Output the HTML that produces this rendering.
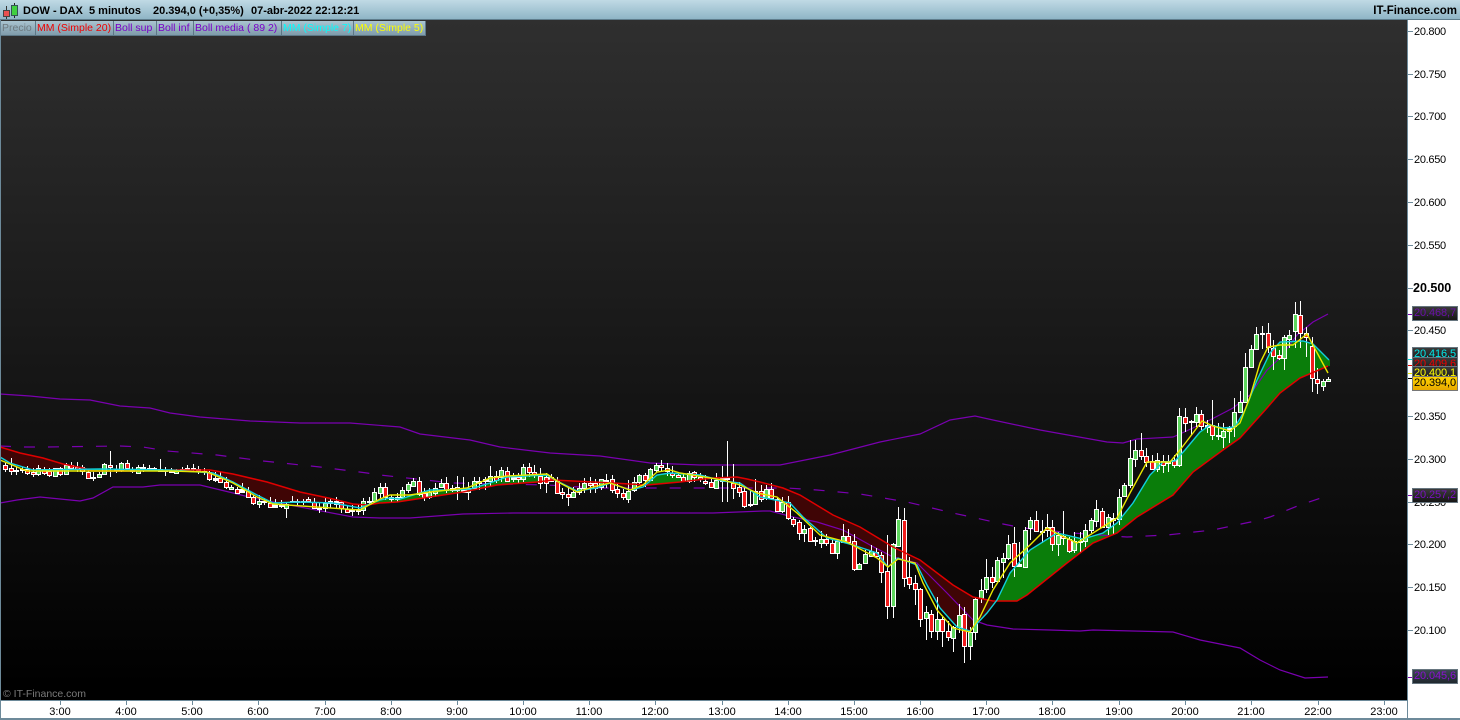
<!DOCTYPE html>
<html lang="es"><head><meta charset="utf-8"><title>DOW - DAX</title>
<style>
html,body{margin:0;padding:0;background:#fff}
#r{position:relative;width:1460px;height:720px;overflow:hidden;font-family:"Liberation Sans",Arial,sans-serif;background:#fff}
#r div{position:absolute;white-space:pre}
#hd{left:0;top:0;width:1460px;height:20px;background:linear-gradient(#c0dae5,#8fb5c6);border-bottom:1px solid #5f7d8c;box-sizing:border-box}
.h{top:4px;font-size:11px;font-weight:bold;color:#000;line-height:14px}
#chart{position:absolute;left:1px;top:20px;width:1406px;height:680px;background:linear-gradient(#2f2f2f,#000 98%)}
#sv{position:absolute;left:0;top:0}
.l{top:21px;height:14px;line-height:14px;font-size:10.5px;background:linear-gradient(#a9c4d0,#7f9cab);border-right:1px solid #5d7786;border-bottom:1px solid #5d7786;box-sizing:content-box;padding-left:1px;overflow:hidden}
.y{left:1414px;font-size:11px;letter-spacing:-.3px;line-height:14px;color:#000;margin-top:1px}
.t{left:1408px;width:5px;height:1px;background:#6d8a9a}
.tag{left:1412px;width:44px;height:13px;line-height:13px;font-size:11px;letter-spacing:-.1px;border:1px solid #66757f;text-align:center;overflow:hidden;background:linear-gradient(#3a3a3a,#161616)}
.x{top:705px;width:40px;text-align:center;font-size:11px;line-height:14px;color:#000}
.xt{top:701px;width:1px;height:4px;background:#6d8a9a}
</style></head><body><div id="r">
<div id="chart"></div>
<svg id="sv" width="1407" height="700" viewBox="0 0 1407 700"></svg>
<div id="hd"></div>
<svg style="position:absolute;left:2px;top:2px" width="18" height="17"><path d="M4.5 4v13" stroke="#333"/><rect x="1.5" y="8.5" width="6" height="6" fill="#e85050" stroke="#444"/><path d="M12.5 1v15" stroke="#222"/><rect x="9.5" y="3.5" width="6" height="10" fill="#40d040" stroke="#355"/></svg>
<div class="h" style="left:23px">DOW - DAX</div>
<div class="h" style="left:89px">5 minutos</div>
<div class="h" style="left:153px">20.394,0 (+0,35%)</div>
<div class="h" style="left:251px">07-abr-2022 22:12:21</div>
<div class="h" style="right:3px;font-size:11.5px">IT-Finance.com</div>
<div class="l" style="left:1px;width:33px;color:#6d7a80">Precio</div>
<div class="l" style="left:36px;width:76px;color:#f00000">MM (Simple 20)</div>
<div class="l" style="left:114px;width:41px;color:#7a00c8">Boll sup</div>
<div class="l" style="left:157px;width:35px;color:#7a00c8">Boll inf</div>
<div class="l" style="left:194px;width:86px;color:#7a00c8">Boll media ( 89 2)</div>
<div class="l" style="left:282px;width:70px;color:#00ffff">MM (Simple 7)</div>
<div class="l" style="left:354px;width:70px;color:#ffff00">MM (Simple 5)</div>
<div style="left:1407px;top:20px;width:1px;height:698px;background:#6d8a9a"></div>
<div style="left:0;top:700px;width:1407px;height:1px;background:#6d8a9a"></div>
<div style="left:0;top:718px;width:1460px;height:2px;background:#6d8a9a"></div>
<div style="left:0;top:20px;width:1px;height:700px;background:#6d8a9a"></div>
<div style="left:3px;top:687px;font-size:10.5px;line-height:14px;color:#7a7a7a">© IT-Finance.com</div>

<div class="t" style="top:31px"></div><div class="y" style="top:24px">20.800</div>
<div class="t" style="top:74px"></div><div class="y" style="top:67px">20.750</div>
<div class="t" style="top:116px"></div><div class="y" style="top:109px">20.700</div>
<div class="t" style="top:159px"></div><div class="y" style="top:152px">20.650</div>
<div class="t" style="top:202px"></div><div class="y" style="top:195px">20.600</div>
<div class="t" style="top:245px"></div><div class="y" style="top:238px">20.550</div>
<div class="t" style="top:288px"></div><div class="y" style="top:280px;left:1413px;font-weight:bold;font-size:12.5px;letter-spacing:0">20.500</div>
<div class="t" style="top:330px"></div><div class="y" style="top:323px">20.450</div>
<div class="t" style="top:416px"></div><div class="y" style="top:409px">20.350</div>
<div class="t" style="top:459px"></div><div class="y" style="top:452px">20.300</div>
<div class="t" style="top:502px"></div><div class="y" style="top:495px">20.250</div>
<div class="t" style="top:544px"></div><div class="y" style="top:537px">20.200</div>
<div class="t" style="top:587px"></div><div class="y" style="top:580px">20.150</div>
<div class="t" style="top:630px"></div><div class="y" style="top:623px">20.100</div>

<div class="t" style="top:314px;background:#7a00b0"></div>
<div class="t" style="top:359px;background:#00e0e0"></div>
<div class="t" style="top:365px;background:#e00000"></div>
<div class="t" style="top:373px;background:#e8e800"></div>
<div class="t" style="top:378px;background:#000"></div>
<div class="t" style="top:495px;background:#7a00b0"></div>
<div class="t" style="top:677px;background:#7a00b0"></div>
<div class="tag" style="top:306px;color:#6a10a8">20.468,7</div>
<div class="tag" style="top:347px;color:#00e8e8">20.416,5</div>
<div class="tag" style="top:357px;color:#f00000">20.409,6</div>
<div class="tag" style="top:366px;color:#ffff00">20.400,1</div>
<div class="tag" style="top:376px;color:#000;background:linear-gradient(#ffd400,#e8a800);border-color:#777">20.394,0</div>
<div class="tag" style="top:488px;color:#7a10c0">20.257,2</div>
<div class="tag" style="top:669px;color:#8a10d0;background:linear-gradient(#3a4650,#20282e)">20.045,6</div>

<div class="xt" style="left:60px"></div><div class="x" style="left:40px">3:00</div>
<div class="xt" style="left:126px"></div><div class="x" style="left:106px">4:00</div>
<div class="xt" style="left:192px"></div><div class="x" style="left:172px">5:00</div>
<div class="xt" style="left:258px"></div><div class="x" style="left:238px">6:00</div>
<div class="xt" style="left:325px"></div><div class="x" style="left:305px">7:00</div>
<div class="xt" style="left:391px"></div><div class="x" style="left:371px">8:00</div>
<div class="xt" style="left:457px"></div><div class="x" style="left:437px">9:00</div>
<div class="xt" style="left:523px"></div><div class="x" style="left:503px">10:00</div>
<div class="xt" style="left:589px"></div><div class="x" style="left:569px">11:00</div>
<div class="xt" style="left:655px"></div><div class="x" style="left:635px">12:00</div>
<div class="xt" style="left:722px"></div><div class="x" style="left:702px">13:00</div>
<div class="xt" style="left:788px"></div><div class="x" style="left:768px">14:00</div>
<div class="xt" style="left:854px"></div><div class="x" style="left:834px">15:00</div>
<div class="xt" style="left:920px"></div><div class="x" style="left:900px">16:00</div>
<div class="xt" style="left:986px"></div><div class="x" style="left:966px">17:00</div>
<div class="xt" style="left:1052px"></div><div class="x" style="left:1032px">18:00</div>
<div class="xt" style="left:1119px"></div><div class="x" style="left:1099px">19:00</div>
<div class="xt" style="left:1185px"></div><div class="x" style="left:1165px">20:00</div>
<div class="xt" style="left:1251px"></div><div class="x" style="left:1231px">21:00</div>
<div class="xt" style="left:1318px"></div><div class="x" style="left:1298px">22:00</div>
<div class="xt" style="left:1384px"></div><div class="x" style="left:1364px">23:00</div>
</div>
<script>
var red=[0,447,20,453,43,458,63,464,83,468,93,471,133,471,173,470,210,470,233,474,267,482,300,492,333,499,353,504,367,505,380,503,397,502,430,497,463,492,497,485,537,482,553,480,613,483,647,485,680,482,713,478,737,477,747,479,760,482,783,488,800,495,833,515,860,527,893,547,920,560,953,585,973,597,993,601,1017,601,1027,595,1067,563,1093,543,1117,533,1137,517,1173,495,1193,472,1223,450,1240,438,1267,408,1280,393,1300,378,1328,366];
var cy=[0,457,10,463,33,470,100,469,170,470,213,473,233,482,257,495,273,503,300,502,333,503,360,508,380,500,390,498,400,499,430,490,447,490,470,489,490,483,507,477,547,475,557,481,577,491,597,488,610,483,630,490,643,487,657,475,670,473,700,475,723,481,740,483,760,497,790,503,803,517,827,538,853,545,877,553,888,567,898,558,917,565,927,585,940,608,957,627,970,631,987,613,997,600,1010,573,1030,550,1057,533,1083,539,1103,533,1117,523,1133,503,1150,475,1163,462,1175,461,1185,450,1200,432,1210,425,1223,428,1235,427,1245,410,1257,380,1270,353,1280,342,1303,341,1313,344,1329,360];
var ye=[0,460,27,471,100,471,170,471,207,472,233,483,257,497,273,504,360,510,380,499,390,495,410,495,430,492,467,488,490,478,507,476,547,474,560,483,577,492,593,487,610,483,630,490,643,485,657,472,670,470,680,473,723,480,740,485,757,493,777,497,797,513,820,535,847,542,877,558,888,567,898,559,915,563,923,583,937,610,953,628,970,632,980,617,993,590,1010,563,1030,545,1047,528,1060,535,1077,543,1093,533,1117,518,1130,493,1147,462,1170,462,1180,450,1193,433,1202,421,1213,426,1230,431,1240,423,1250,397,1260,363,1268,347,1280,345,1293,345,1307,334,1328,373];
var up=[0,394,30,396,60,399,90,400,120,406,150,408,170,413,200,417,250,421,300,423,350,423,400,427,420,434,470,440,500,447,550,453,600,456,650,463,700,465,780,465,830,455,880,442,920,434,950,420,975,416,993,420,1040,430,1107,442,1123,443,1137,439,1173,437,1180,434,1210,420,1233,408,1250,395,1267,370,1280,358,1297,335,1313,322,1328,314];
var lo=[0,503,17,500,40,497,80,501,93,498,113,487,143,487,160,485,200,485,233,493,253,498,300,507,353,517,380,518,410,518,463,514,513,513,713,513,763,511,770,511,793,517,817,522,843,530,870,545,893,557,917,563,947,593,973,620,987,625,1013,629,1050,630,1080,631,1093,630,1133,631,1173,632,1200,640,1240,648,1260,660,1280,670,1305,678,1328,677];
var mid=[0,446,23,447,47,447,120,446,143,447,167,451,217,455,263,461,320,467,367,473,380,475,407,478,453,483,500,484,547,485,597,488,727,488,787,488,817,490,860,494,907,502,953,513,1003,524,1023,528,1073,533,1127,537,1167,535,1213,530,1260,520,1270,517,1300,505,1330,495];
function ip(a,x){for(var i=0;i<a.length-2;i+=2){if(x<=a[i+2]){return a[i+1]+(a[i+3]-a[i+1])*(x-a[i])/(a[i+2]-a[i]);}}return a[a.length-1];}
function pl(a,c,w,d){return '<polyline fill="none" stroke="'+c+'" stroke-width="'+w+'"'+(d?' stroke-dasharray="'+d+'"':'')+' points="'+a.join(' ')+'"/>';}
var z5=[[16,70,76,88,95,'r'],[32,55,85,92,105,'r'],[49,82,90,92,105,'w'],[66,82,88,90,98,'w'],[82,78,88,98,105,'r'],[98,85,95,103,112,'r'],[115,75,85,103,108,'g'],[131,80,86,100,105,'r'],[148,85,92,105,112,'r'],[164,85,85,108,110,'g'],[181,80,85,103,108,'r'],[197,70,76,103,105,'g'],[214,65,76,85,90,'r'],[231,65,80,88,95,'r'],[247,75,80,92,105,'r'],[263,90,95,113,118,'r'],[280,95,112,114,122,'w'],[296,95,102,112,115,'g'],[313,70,73,103,105,'g'],[331,33,76,82,110,'r'],[349,75,88,90,98,'w'],[364,65,68,90,95,'g'],[380,60,68,85,90,'r'],[397,82,88,92,100,'w'],[413,75,82,98,100,'g'],[430,72,80,84,95,'w'],[446,75,83,85,90,'w'],[463,80,83,85,90,'w'],[479,58,88,93,95,'r'],[496,82,90,92,108,'w'],[512,85,92,96,100,'w'],[529,88,92,100,102,'g'],[545,82,88,92,95,'w'],[562,75,84,88,95,'w'],[578,72,83,85,95,'w'],[595,78,88,92,102,'w'],[611,85,93,97,105,'w'],[628,92,97,118,122,'r'],[644,95,115,119,125,'w'],[661,95,115,125,125,'r'],[677,110,127,140,148,'r'],[694,135,140,147,150,'g'],[710,140,148,160,160,'r'],[727,130,148,155,160,'w'],[743,140,152,170,172,'r'],[760,165,172,190,195,'r'],[776,165,184,193,205,'g'],[793,175,183,186,195,'w'],[809,170,190,200,205,'r'],[826,178,192,200,205,'w'],[842,180,192,198,205,'w'],[859,190,193,203,233,'g'],[875,168,182,184,190,'w'],[892,178,182,184,195,'w'],[908,178,182,184,195,'w'],[925,172,177,184,190,'r'],[941,175,186,203,205,'r'],[958,190,204,206,218,'w'],[975,175,190,205,215,'g'],[991,175,184,188,205,'w'],[1007,170,184,192,205,'w'],[1024,182,186,205,220,'r'],[1041,195,208,215,220,'r'],[1057,195,210,212,228,'w'],[1074,195,208,214,225,'w'],[1090,175,182,210,225,'g'],[1107,170,182,186,192,'w'],[1123,145,155,183,190,'g'],[1139,130,140,160,175,'g']];
var z6=[[15,130,140,172,180,'r'],[33,165,172,178,185,'w'],[50,160,172,178,185,'w'],[66,140,150,170,172,'g'],[83,125,133,150,158,'g'],[100,115,123,137,140,'g'],[116,110,122,163,168,'r'],[132,145,160,172,182,'r'],[148,145,157,172,178,'g'],[166,130,143,158,170,'g'],[182,118,130,140,145,'g'],[199,112,130,150,160,'r'],[215,135,145,150,155,'w'],[232,108,140,150,180,'r'],[248,112,150,155,160,'w'],[265,125,143,155,180,'g'],[281,112,122,143,150,'g'],[298,110,122,130,150,'w'],[314,110,116,122,150,'w'],[330,78,107,122,138,'g'],[347,92,107,120,130,'r'],[364,80,91,112,125,'g'],[381,82,92,122,125,'r'],[398,100,112,118,125,'w'],[414,100,112,118,130,'r'],[430,72,80,118,125,'g'],[447,70,82,95,112,'r'],[463,75,95,102,115,'r'],[480,85,107,128,148,'r'],[497,100,110,128,160,'r'],[514,102,110,122,125,'r'],[530,110,122,158,160,'r'],[547,145,155,163,178,'r'],[563,140,163,170,197,'r'],[580,140,155,170,172,'g'],[596,130,145,155,165,'g'],[612,115,128,145,158,'g'],[629,110,128,135,160,'r'],[646,118,130,143,158,'r'],[662,118,118,142,150,'g'],[679,102,120,124,145,'w'],[695,105,118,150,160,'r'],[712,130,148,160,175,'r'],[728,148,160,172,180,'r'],[745,120,153,177,190,'g'],[761,110,125,150,155,'g'],[778,102,106,127,135,'g'],[795,100,106,120,140,'r'],[811,85,88,120,122,'g'],[828,70,76,90,100,'g'],[844,60,76,82,92,'r'],[860,70,84,92,108,'r'],[877,78,98,104,115,'r'],[893,95,104,110,115,'r'],[910,98,110,122,125,'r'],[926,92,98,122,130,'g'],[943,92,95,110,125,'r'],[959,100,110,118,125,'r'],[976,105,122,128,135,'r'],[993,115,127,140,145,'r'],[1009,100,120,143,145,'g'],[1026,78,115,122,185,'w'],[1042,3,115,118,185,'w'],[1060,72,128,145,178,'r'],[1077,125,140,155,170,'r'],[1093,140,153,197,205,'r'],[1110,150,192,196,200,'w'],[1126,118,152,193,195,'g'],[1142,135,152,176,185,'r']];
var z4=[[18,45,58,85,90,'g'],[34,38,58,85,90,'r'],[50,85,88,122,120,'r'],[67,80,97,122,128,'g'],[85,78,97,145,150,'r'],[100,140,148,162,172,'r'],[118,150,157,188,210,'r'],[133,165,178,188,215,'g'],[151,170,175,212,215,'r'],[166,200,210,214,228,'w'],[184,182,207,218,235,'g'],[199,192,208,220,228,'r'],[217,210,220,248,250,'r'],[232,208,212,250,267,'g'],[250,162,198,215,215,'g'],[265,178,198,215,215,'r'],[283,192,213,298,302,'r'],[298,280,283,296,298,'g'],[316,240,253,280,282,'g'],[332,225,243,258,260,'g'],[349,235,245,258,262,'r'],[364,245,256,307,338,'r'],[382,195,304,407,447,'r'],[398,220,223,407,443,'g'],[415,112,148,228,228,'g'],[431,115,151,325,350,'r'],[448,262,322,341,357,'r'],[466,315,340,358,405,'r'],[481,355,358,448,470,'r'],[499,408,427,445,510,'g'],[514,420,431,482,503,'r'],[532,380,448,482,510,'g'],[547,440,446,484,530,'r'],[565,452,482,502,512,'r'],[580,468,470,505,545,'g'],[598,403,436,470,490,'g'],[613,410,433,529,580,'r'],[631,470,487,529,570,'g']];
var z3=[[46,534,536,636,660,'g'],[64,477,511,533,550,'g'],[79,417,472,507,520,'g'],[97,442,472,485,505,'r'],[112,410,421,484,485,'g'],[130,400,415,425,475,'g'],[145,345,373,415,420,'g'],[163,322,370,438,472,'r'],[178,365,432,438,440,'w'],[196,322,331,440,442,'g'],[211,290,301,325,360,'g'],[229,273,301,334,335,'r'],[247,300,333,335,370,'w'],[262,283,320,330,350,'r'],[277,300,320,373,392,'r'],[295,335,346,373,407,'g'],[310,273,347,355,375,'r'],[328,352,356,394,400,'r'],[343,335,362,391,398,'g'],[361,335,362,365,400,'w'],[376,313,331,362,380,'g'],[394,295,301,331,340,'g'],[409,240,268,304,320,'g'],[427,265,272,321,325,'r'],[445,283,292,322,345,'g'],[460,280,295,300,342,'w'],[478,208,230,298,315,'g'],[493,190,196,228,230,'g'],[511,60,115,196,205,'g'],[526,60,91,118,140,'g'],[544,38,91,108,120,'r'],[559,85,109,125,142,'r'],[577,105,122,148,150,'r'],[592,100,120,146,155,'g'],[610,105,122,136,158,'r'],[625,105,126,130,155,'w'],[643,105,120,134,145,'r'],[658,-36,-12,136,142,'g']];
var z10=[[16,265,292,308,335,'r'],[32,300,303,306,345,'w'],[48,262,283,305,320,'g'],[64,270,283,318,330,'r'],[80,300,316,320,340,'w'],[97,240,316,346,360,'r'],[113,310,345,349,360,'w'],[130,310,333,352,385,'g'],[147,318,320,332,370,'w'],[162,235,277,318,350,'g'],[180,213,247,277,278,'g'],[196,100,140,245,250,'g'],[213,75,88,142,145,'g'],[229,20,43,86,90,'g'],[246,18,38,42,88,'w'],[263,8,38,82,100,'r'],[280,60,85,108,150,'r'],[296,90,106,115,120,'r']];
var z2=[[13,165,172,235,270,'g'],[28,150,165,178,205,'g'],[46,65,102,152,205,'g'],[61,62,106,158,205,'r'],[79,140,160,172,232,'r'],[97,172,198,295,335,'r'],[112,265,296,310,342,'r'],[130,298,302,318,332,'g'],[145,292,296,304,306,'g']];
var C=[];
function add(t,ox,oy){t.forEach(function(c){C.push([ox+c[0]/3,oy+c[1]/3,oy+c[2]/3,oy+c[3]/3,oy+c[4]/3,c[5]]);});}
add(z5,0,440);add(z6,380,440);add(z4,760,470);add(z3,960,420);add(z10,1180,320);add(z2,1280,280);
var fg='',fr='';
for(var x=1;x<1330;x++){var a=ip(red,x+.5),b=ip(cy,x+.5);var s=' M'+(x+.5)+' '+a.toFixed(1)+'V'+b.toFixed(1);if(b<a)fg+=s;else fr+=s;}
var h='<path d="'+fr+'" stroke="#3f0505" stroke-width="1" fill="none" shape-rendering="crispEdges"/><path d="'+fg+'" stroke="#0a7d0a" stroke-width="1" fill="none" shape-rendering="crispEdges"/>';
h+=pl(up,'#7a00b0',1.2)+pl(lo,'#7a00b0',1.2)+pl(mid,'#7a00b0',1.2,'11 13');
var wk='',bd='',col={r:'#f01c1c',g:'#5ed65e',w:'#ffffff'};
C.forEach(function(c){var p=Math.round(c[0]);wk+='M'+(p+.5)+' '+Math.round(c[1])+'V'+Math.round(c[4]);
var t=Math.round(c[2]),e=Math.max(Math.round(c[3]),t+1);
bd+='<rect x="'+(p-1.5)+'" y="'+(t+.5)+'" width="4" height="'+(e-t)+'" fill="'+col[c[5]]+'" stroke="#fff"/>';});
h+='<path d="'+wk+'" stroke="#fff" stroke-width="1" fill="none" shape-rendering="crispEdges"/><g shape-rendering="crispEdges">'+bd+'</g>';
h+=pl(red,'#e00000',1.5)+pl(cy,'#10d0dc',1.4)+pl(ye,'#e8e800',1.4);
document.getElementById('sv').innerHTML=h;
</script>
</body></html>
